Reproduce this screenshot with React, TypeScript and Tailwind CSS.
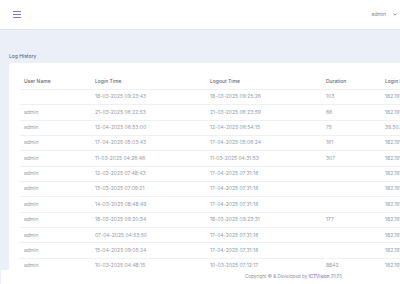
import React from "react";

const rows: [string, string, string, string, string][] = [
  ["", "18-03-2025 09:23:43", "18-03-2025 09:25:26", "103", "182.191.145.87"],
  ["admin", "21-03-2025 06:22:53", "21-03-2025 06:23:59", "66", "182.191.145.87"],
  ["admin", "12-04-2025 06:53:00", "12-04-2025 06:54:15", "75", "39.50.152.14"],
  ["admin", "17-04-2025 05:03:43", "17-04-2025 05:06:24", "161", "182.191.145.87"],
  ["admin", "11-03-2025 04:26:46", "11-03-2025 04:31:53", "307", "182.191.145.87"],
  ["admin", "12-03-2025 07:48:43", "17-04-2025 07:31:16", "", "182.191.145.87"],
  ["admin", "13-03-2025 07:09:21", "17-04-2025 07:31:16", "", "182.191.145.87"],
  ["admin", "14-03-2025 08:48:49", "17-04-2025 07:31:16", "", "182.191.145.87"],
  ["admin", "18-03-2025 09:20:34", "18-03-2025 09:23:31", "177", "182.191.145.87"],
  ["admin", "07-04-2025 04:53:50", "17-04-2025 07:31:16", "", "182.191.145.87"],
  ["admin", "15-04-2025 09:05:24", "17-04-2025 07:31:16", "", "182.191.145.87"],
  ["admin", "10-03-2025 04:48:15", "10-03-2025 07:12:17", "8842", "182.191.145.87"],
];

const widths = ["w-[71px]", "w-[115px]", "w-[116px]", "w-[59px]", "w-[120px]"];

export default function App() {
  return (
    <div className="relative w-[400px] h-[284px] overflow-hidden bg-[#ebeff8] font-['Inter',sans-serif]">
      <header className="h-[30px] bg-white border-b border-[#e1e5ee] flex items-center justify-between pl-[13px] pr-[3px]">
        <div className="flex flex-col gap-[2px] w-[8px]">
          <span className="block h-[1px] bg-[#8576d8]" />
          <span className="block h-[1px] bg-[#8576d8]" />
          <span className="block h-[1px] bg-[#8576d8]" />
        </div>
        <div className="flex items-center gap-[7px] text-[5px] text-[#7b808a]">
          <span>admin</span>
          <svg width="4" height="3" viewBox="0 0 4 3">
            <path d="M0.5 0.6 L2 2.2 L3.5 0.6" fill="none" stroke="#6b7280" strokeWidth="0.8" />
          </svg>
        </div>
      </header>
      <div className="pl-[9px] pt-[23px]">
        <div className="h-[7px] leading-[7px] text-[5px] text-[#4b5160]">Log History</div>
        <div className="mt-[3px] w-[520px] bg-white rounded-[3px] pl-[11px] pt-[11px] pb-[20px]">
          <div className="flex h-[16px] items-center border-b border-[#eef0f3] text-[5px] font-medium text-[#646973]">
            {["User Name", "Login Time", "Logout Time", "Duration", "Login IP"].map((h, i) => (
              <div key={h} className={`${widths[i]} shrink-0 pl-[4px] whitespace-nowrap`}>{h}</div>
            ))}
          </div>
          {rows.map((r, ri) => (
            <div key={ri} className="flex h-[15.35px] items-center border-b border-[#eef0f3] text-[5px] text-[#959aa3]">
              {r.map((c, i) => (
                <div key={i} className={`${widths[i]} shrink-0 pl-[4px] whitespace-nowrap`}>{c}</div>
              ))}
            </div>
          ))}
        </div>
      </div>
      <footer className="absolute bottom-0 left-[1px] right-0 h-[14px] bg-white flex items-center pl-[244px] text-[4.6px] text-[#8d929b] whitespace-nowrap">
        <span>
          Copyright © &amp; Developed by <span className="text-[#6a55c9]">ICTVision</span> 2025
        </span>
      </footer>
    </div>
  );
}
